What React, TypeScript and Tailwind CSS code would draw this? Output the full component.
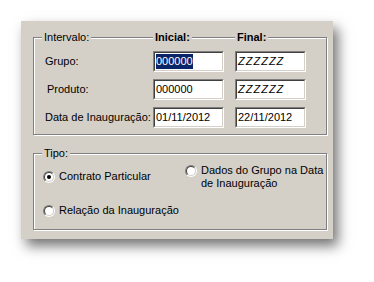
import React from "react";

const font = { fontFamily: '"Liberation Sans", Arial, sans-serif' };

const Field = ({ value, selected, italic }: { value: string; selected?: boolean; italic?: boolean }) => (
  <div className="w-[71px] h-[21px] border border-t-[#808080] border-l-[#808080] border-b-white border-r-white">
    <div className="h-full border border-t-[#404040] border-l-[#404040] border-b-[#d4d0c8] border-r-[#d4d0c8] bg-white flex items-center pl-[1px] text-[11px] text-black leading-none">
      {selected ? (
        <span className="bg-[#0a246a] text-white py-[2px]">{value}</span>
      ) : (
        <span className={italic ? "italic tracking-[1px]" : ""}>{value}</span>
      )}
    </div>
  </div>
);

const Radio = ({ checked }: { checked?: boolean }) => (
  <div className="w-[12px] h-[12px] shrink-0 rounded-full border border-t-[#808080] border-l-[#808080] border-b-white border-r-white">
    <div className="w-full h-full rounded-full border border-t-[#404040] border-l-[#404040] border-b-[#d4d0c8] border-r-[#d4d0c8] bg-white flex items-center justify-center">
      {checked && <div className="w-[4px] h-[4px] rounded-full bg-black" />}
    </div>
  </div>
);

const rows = [
  { label: "Grupo:", ini: "000000", fim: "ZZZZZZ", pad: "pl-0", selected: true, italic: true },
  { label: "Produto:", ini: "000000", fim: "ZZZZZZ", pad: "pl-[2px]", italic: true },
  { label: "Data de Inauguração:", ini: "01/11/2012", fim: "22/11/2012", pad: "pl-0" },
];

export default function App() {
  return (
    <div className="w-[374px] h-[282px] bg-white pt-[21px] pl-[21px]" style={font}>
      <div className="w-[312px] h-[218px] bg-[#d4d0c8] shadow-[5px_7px_12px_rgba(0,0,0,0.55)] pt-[16px] pl-[12px] text-[11px] text-black">
        {/* Intervalo */}
        <div className="relative w-[294px] h-[98px] border border-[#808080] shadow-[inset_1px_1px_0_#fff,1px_1px_0_#fff] pt-[13px] pl-[11px]">
          <span className="absolute left-[8px] -top-[8px] bg-[#d4d0c8] px-[2px] leading-[14px]">Intervalo:</span>
          <span className="absolute left-[119px] -top-[8px] bg-[#d4d0c8] px-[2px] leading-[14px] font-bold">Inicial:</span>
          <span className="absolute left-[201px] -top-[8px] bg-[#d4d0c8] px-[2px] leading-[14px] font-bold">Final:</span>
          <div className="flex flex-col gap-[7px]">
            {rows.map((r) => (
              <div key={r.label} className="flex items-center">
                <div className={`w-[108px] ${r.pad}`}>{r.label}</div>
                <Field value={r.ini} selected={r.selected} />
                <div className="w-[11px]" />
                <Field value={r.fim} italic={r.italic} />
              </div>
            ))}
          </div>
        </div>

        {/* Tipo */}
        <div className="relative mt-[18px] w-[294px] h-[77px] border border-[#808080] shadow-[inset_1px_1px_0_#fff,1px_1px_0_#fff] pl-[9px]">
          <span className="absolute left-[8px] -top-[8px] bg-[#d4d0c8] px-[2px] leading-[14px]">Tipo:</span>
          <div className="flex">
            <div className="w-[142px] flex flex-col pt-[16px] gap-[21px] leading-[13px]">
              <div className="flex items-center gap-[4px]">
                <Radio checked />
                <span>Contrato Particular</span>
              </div>
              <div className="flex items-center gap-[4px]">
                <Radio />
                <span>Relação da Inauguração</span>
              </div>
            </div>
            <div className="flex items-start gap-[4px] pt-[10px]">
              <div className="pt-[1px]">
                <Radio />
              </div>
              <span className="leading-[13px]">
                Dados do Grupo na Data
                <br />
                de Inauguração
              </span>
            </div>
          </div>
        </div>
      </div>
    </div>
  );
}
